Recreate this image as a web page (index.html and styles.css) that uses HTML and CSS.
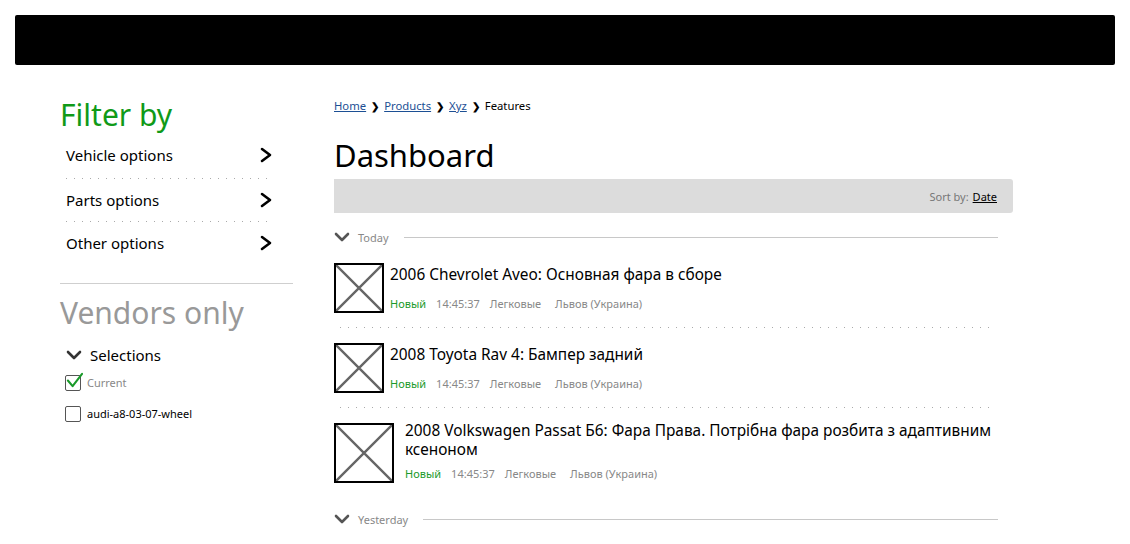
FILE: index.html
```html
<!DOCTYPE html>
<html>
<head>
<meta charset="utf-8">
<link rel="stylesheet" href="styles.css">
</head>
<body>
<div class="topbar"></div>
<div class="layout">
  <aside class="sidebar">
    <h2 class="filter-title">Filter by</h2>
    <ul class="menu">
      <li class="menu-item first"><span>Vehicle options</span><svg class="chev" viewBox="0 0 12 16"><path d="M2 2 L10 8 L2 14" fill="none" stroke="#000" stroke-width="2.6" stroke-linecap="round" stroke-linejoin="round"/></svg></li>
      <li class="dots"></li>
      <li class="menu-item"><span>Parts options</span><svg class="chev" viewBox="0 0 12 16"><path d="M2 2 L10 8 L2 14" fill="none" stroke="#000" stroke-width="2.6" stroke-linecap="round" stroke-linejoin="round"/></svg></li>
      <li class="dots"></li>
      <li class="menu-item"><span>Other options</span><svg class="chev" viewBox="0 0 12 16"><path d="M2 2 L10 8 L2 14" fill="none" stroke="#000" stroke-width="2.6" stroke-linecap="round" stroke-linejoin="round"/></svg></li>
    </ul>
    <div class="side-rule"></div>
    <h2 class="vendors-title">Vendors only</h2>
    <div class="selections"><svg class="down" viewBox="0 0 16 12"><path d="M2 3 L8 9 L14 3" fill="none" stroke="#333" stroke-width="2.6" stroke-linecap="round" stroke-linejoin="round"/></svg><span>Selections</span></div>
    <label class="check-row"><span class="box"><svg class="tick" viewBox="0 0 18 18"><path d="M2 9 L7 15 L17 2" fill="none" stroke="#1a9a2a" stroke-width="2.2" stroke-linecap="round" stroke-linejoin="round"/></svg></span><span class="check-label muted">Current</span></label>
    <label class="check-row"><span class="box"></span><span class="check-label">audi-a8-03-07-wheel</span></label>
  </aside>
  <main class="main">
    <nav class="crumbs"><a>Home</a><span class="sep">❯</span><a>Products</a><span class="sep">❯</span><a>Xyz</a><span class="sep">❯</span><span>Features</span></nav>
    <h1 class="page-title">Dashboard</h1>
    <div class="sortbar"><span class="sort-label">Sort by:</span><a class="sort-link">Date</a></div>
    <div class="group"><svg class="down" viewBox="0 0 16 12"><path d="M2 3 L8 9 L14 3" fill="none" stroke="#555" stroke-width="2.6" stroke-linecap="round" stroke-linejoin="round"/></svg><span class="group-label">Today</span><span class="group-line"></span></div>
    <div class="item">
      <div class="thumb"><svg viewBox="0 0 46 46" preserveAspectRatio="none"><path d="M0 0 L46 46 M46 0 L0 46" stroke="#666" stroke-width="2.4"/></svg></div>
      <div class="item-body">
        <div class="item-title">2006 Chevrolet Aveo: Основная фара в сборе</div>
        <div class="meta"><span class="new">Новый</span><span>14:45:37</span><span>Легковые</span><span class="city">Львов (Украина)</span></div>
      </div>
    </div>
    <div class="item-dots"></div>
    <div class="item">
      <div class="thumb"><svg viewBox="0 0 46 46" preserveAspectRatio="none"><path d="M0 0 L46 46 M46 0 L0 46" stroke="#666" stroke-width="2.4"/></svg></div>
      <div class="item-body">
        <div class="item-title">2008 Toyota Rav 4: Бампер задний</div>
        <div class="meta"><span class="new">Новый</span><span>14:45:37</span><span>Легковые</span><span class="city">Львов (Украина)</span></div>
      </div>
    </div>
    <div class="item-dots"></div>
    <div class="item item-big">
      <div class="thumb thumb-big"><svg viewBox="0 0 56 56" preserveAspectRatio="none"><path d="M0 0 L56 56 M56 0 L0 56" stroke="#666" stroke-width="2.4"/></svg></div>
      <div class="item-body body-big">
        <div class="item-title title-wrap">2008 Volkswagen Passat Б6: Фара Права. Потрібна фара розбита з адаптивним ксеноном</div>
        <div class="meta meta-big"><span class="new">Новый</span><span>14:45:37</span><span>Легковые</span><span class="city">Львов (Украина)</span></div>
      </div>
    </div>
    <div class="group group-y"><svg class="down" viewBox="0 0 16 12"><path d="M2 3 L8 9 L14 3" fill="none" stroke="#555" stroke-width="2.6" stroke-linecap="round" stroke-linejoin="round"/></svg><span class="group-label">Yesterday</span><span class="group-line"></span></div>
  </main>
</div>
</body>
</html>
```

FILE: styles.css
```css
* { box-sizing: border-box; }
html, body { margin: 0; padding: 0; background: #fff; }
body {
  padding: 15px;
  font-family: "Noto Sans", "Liberation Sans", sans-serif;
  color: #000;
  width: 1130px;
  height: 544px;
  overflow: hidden;
}
.topbar {
  width: 1100px;
  height: 50px;
  background: #000;
  border-radius: 2px;
}
.layout {
  display: flex;
  padding-left: 45px;
}
.sidebar {
  width: 233px;
  flex: none;
}
.filter-title {
  margin: 30px 0 0 0;
  font-size: 30px;
  font-weight: 400;
  color: #109a18;
  line-height: 40px;
  height: 40px;
}
.menu {
  list-style: none;
  margin: 0;
  padding: 0 0 0 6px;
  width: 212px;
}
.menu-item {
  display: flex;
  align-items: center;
  justify-content: space-between;
  height: 42px;
  font-size: 15px;
}
.menu-item.first { height: 43px; padding-bottom: 4px; }
.chev { width: 12px; height: 16px; }
.dots {
  height: 1px;
  background: repeating-linear-gradient(to right, #aaa 0 1px, transparent 1px 8px);
}
.side-rule {
  margin-top: 19px;
  height: 1px;
  background: #cfcfcf;
}
.vendors-title {
  margin: 9px 0 0 0;
  font-size: 30px;
  font-weight: 400;
  color: #999;
  line-height: 40px;
  height: 40px;
}
.selections {
  display: flex;
  align-items: center;
  margin-top: 10px;
  padding-left: 6px;
  font-size: 15px;
  height: 24px;
}
.selections .down { width: 16px; height: 12px; margin-right: 8px; }
.check-row {
  display: flex;
  align-items: center;
  padding-left: 5px;
  height: 31px;
}
.box {
  position: relative;
  width: 16px;
  height: 16px;
  border: 1px solid #555;
  border-radius: 2px;
  flex: none;
}
.tick {
  position: absolute;
  left: 0;
  top: -4px;
  width: 17px;
  height: 17px;
}
.check-label {
  margin-left: 6px;
  font-size: 11px;
}
.check-label.muted { color: #888; }

.main {
  margin-left: 41px;
  width: 679px;
  flex: none;
}
.crumbs {
  margin-top: 33px;
  font-size: 11.3px;
  height: 16px;
  line-height: 16px;
  display: flex;
  align-items: center;
}
.crumbs a {
  color: #1c4f94;
  text-decoration: underline;
}
.sep {
  font-size: 10px;
  margin: 0 5px 0 5px;
  font-weight: 700;
}
.page-title {
  margin: 21px 0 0 0;
  font-size: 31px;
  font-weight: 400;
  line-height: 40px;
  height: 40px;
}
.sortbar {
  margin-top: 4px;
  height: 34px;
  background: #dcdcdc;
  border-radius: 0 3px 3px 0;
  display: flex;
  align-items: center;
  justify-content: flex-end;
  padding-right: 16px;
  font-size: 11px;
}
.sort-label { color: #777; margin-right: 4px; }
.sort-link { color: #000; text-decoration: underline; }

.group {
  display: flex;
  align-items: center;
  height: 22px;
  margin-top: 13px;
  width: 664px;
}
.group .down { width: 16px; height: 12px; margin-right: 8px; }
.group-label { font-size: 11px; color: #888; }
.group-line {
  flex: 1;
  height: 1px;
  background: #c8c8c8;
  margin-left: 15px;
}
.item {
  display: flex;
  margin-top: 15px;
}
.thumb {
  width: 50px;
  height: 50px;
  border: 2px solid #000;
  flex: none;
}
.thumb svg { display: block; width: 100%; height: 100%; }
.thumb-big { width: 60px; height: 60px; }
.item-body { margin-left: 6px; }
.body-big { margin-left: 11px; }
.item-title {
  font-size: 15.4px;
  line-height: 20px;
  margin-top: 2px;
}
.title-wrap { width: 600px; line-height: 19px; margin-top: -2px; }
.meta {
  margin-top: 11px;
  font-size: 11px;
  color: #888;
  display: flex;
  gap: 10px;
}
.meta-big { margin-top: 7px; }
.meta .city { margin-left: 4px; }
.meta .new { color: #1a9a2a; }
.item-dots {
  margin: 14px 0 0 6px;
  width: 656px;
  height: 1px;
  background: repeating-linear-gradient(to right, #aaa 0 1px, transparent 1px 8px);
}
.group-y { margin-top: 25px; }
```
